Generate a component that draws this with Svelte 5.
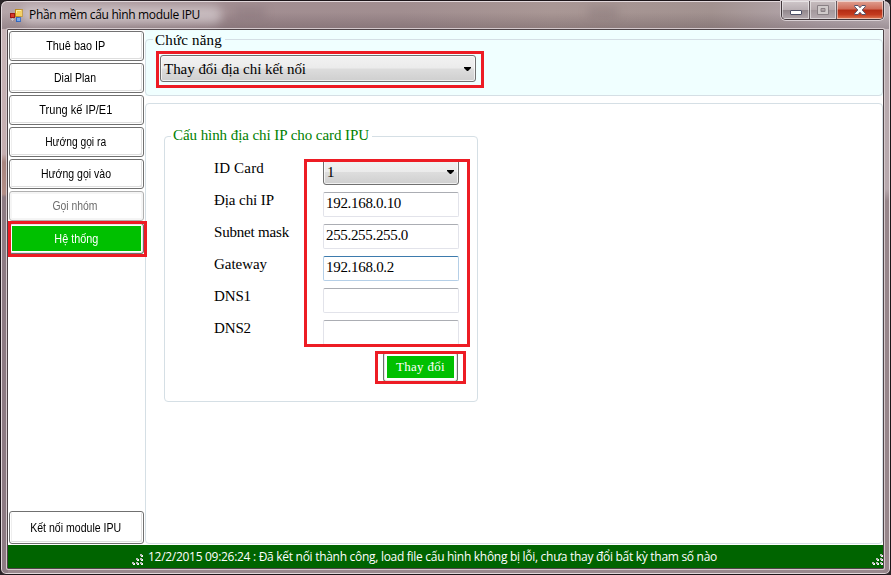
<script>
  const menu = [
    { label: 'Thuê bao IP', w: 59 },
    { label: 'Dial Plan', w: 42 },
    { label: 'Trung kế IP/E1', w: 73 },
    { label: 'Hướng gọi ra', w: 61 },
    { label: 'Hướng gọi vào', w: 70 },
    { label: 'Gọi nhóm', w: 45, disabled: true },
    { label: 'Hệ thống', w: 44, active: true }
  ];
  const fields = [
    { label: 'ID Card', lw: 50, value: '1', w: 8, select: true },
    { label: 'Địa chỉ IP', lw: 60, value: '192.168.0.10', w: 75 },
    { label: 'Subnet mask', lw: 75, value: '255.255.255.0', w: 82 },
    { label: 'Gateway', lw: 53, value: '192.168.0.2', w: 68, focus: true },
    { label: 'DNS1', lw: 37, value: '', w: 0 },
    { label: 'DNS2', lw: 37, value: '', w: 0 }
  ];
  const grip = [[8, 0], [4, 4], [8, 4], [0, 8], [4, 8], [8, 8]];

  // Tracks a label out or in to the requested width.
  function fit(node, width) {
    const count = [...node.textContent].length;
    if (!count || !width) return;
    const natural = node.getBoundingClientRect().width;
    node.style.letterSpacing = `${(width - natural) / count}px`;
  }

  // Condenses a label to the requested width.
  function condense(node, width) {
    node.style.display = 'inline-block';
    node.style.transform = `scaleX(${width / node.getBoundingClientRect().width})`;
  }
</script>

{#snippet gripper()}
  <svg class="grip" width="11" height="11" viewBox="0 0 11 11" shape-rendering="crispEdges">
    {#each grip as [x, y]}
      <rect x={x + 1} y={y + 1} width="2" height="2" fill="#f4f4f4" />
      <rect {x} {y} width="2" height="2" fill="#b9bdb9" />
    {/each}
  </svg>
{/snippet}

{#snippet arrow()}
  <svg class="arrow" width="7" height="4" viewBox="0 0 7 4"><path d="M0 0h7v1L4 4H3L0 1z" fill="#000" /></svg>
{/snippet}

<div class="window">
  <header class="titlebar">
    <svg class="app" width="13" height="13" viewBox="0 0 13 13">
      <rect x="5.5" y=".5" width="7" height="7" fill="#fbcf45" stroke="#b98718" />
      <path d="M6.5 4V1.5H11" stroke="#fff0a0" fill="none" />
      <rect x=".5" y="4.5" width="4" height="4" fill="#d8382b" stroke="#9c1512" />
      <rect x="6.5" y="8.5" width="4" height="4" fill="#6fa5ee" stroke="#2860be" />
      <path d="M1 10.5h3M2.5 9v3" stroke="#c4bdc2" />
    </svg>
    <span class="title"><span use:fit={171}>Phần mềm cấu hình module IPU</span></span>
    <i class="ghost one"></i><i class="ghost two"></i>
    <div class="controls">
      <span class="ctl min">
        <svg width="12" height="5" viewBox="0 0 12 5"><rect x=".5" y=".5" width="11" height="4" rx=".5" fill="#fff" stroke="#4b4f66" /></svg>
      </span>
      <span class="ctl max">
        <svg width="12" height="10" viewBox="0 0 12 10"><path fill-rule="evenodd" d="M.5.5h11v9H.5zM4 3.5h4v3H4z" fill="#d0caca" stroke="#888084" /></svg>
      </span>
      <span class="ctl close">
        <svg width="12" height="10" viewBox="0 0 12 10"><path d="M.7.5h3.4L6 2.7 7.9.5h3.4v1.2L8.2 5l3.1 3.3v1.2H7.9L6 7.3 4.1 9.5H.7V8.3L3.8 5 .7 1.7z" fill="#fff" stroke="#53526a" /></svg>
      </span>
    </div>
  </header>

  <div class="client">
    <div class="body">
      <nav>
        {#each menu as m}
          <button class="item" class:active={m.active} class:off={m.disabled}><span use:condense={m.w}>{m.label}</span></button>
        {/each}
        <button class="item connect"><span use:condense={91}>Kết nối module IPU</span></button>
      </nav>
      <main>
        <section class="top">
          <div class="group func">
            <span class="legend cyan"><span use:fit={67}>Chức năng</span></span>
            <div class="combo wide"><span use:fit={142}>Thay đổi địa chỉ kết nối</span>{@render arrow()}</div>
          </div>
        </section>
        <section class="panel">
          <div class="group card">
            <span class="legend green"><span use:fit={196}>Cấu hình địa chỉ IP cho card IPU</span></span>
            {#each fields as f}
              <div class="row">
                <span class="label"><span use:fit={f.lw}>{f.label}</span></span>
                {#if f.select}
                  <div class="combo"><span>{f.value}</span>{@render arrow()}</div>
                {:else}
                  <div class="input" class:focus={f.focus}><span use:fit={f.w}>{f.value}</span></div>
                {/if}
              </div>
            {/each}
            <button class="change"><span use:fit={49}>Thay đổi</span></button>
          </div>
        </section>
      </main>
    </div>
    <footer>
      {@render gripper()}
      <span class="status"><span use:fit={569}>12/2/2015 09:26:24 : Đã kết nối thành công, load file cấu hình không bị lỗi, chưa thay đổi bất kỳ tham số nào</span></span>
      {@render gripper()}
    </footer>
  </div>

  <i class="mark m1"></i>
  <i class="mark m2"></i>
  <i class="mark m3"></i>
  <i class="mark m4"></i>
</div>

<style>
  :global(body) { background: #2b2528; overflow: hidden; }
  .window {
    position: relative; box-sizing: border-box; width: 891px; height: 575px;
    border: 1px solid #1c1519; border-radius: 7px 7px 6px 6px; padding: 0 5px 5px 6px;
    box-shadow: inset 0 0 0 1px #e3d9dc;
    background:
      linear-gradient(#c9bcc0, #b8aaae 28px, #b8a9ae 160px, #97868b 172px, #97868b) right 1px top 28px / 6px 545px no-repeat,
      linear-gradient(#c8b5b8, #c5aeb0 125px, #a8857f 133px, #b28e87 165px, #8d7b83 168px, #8d7b83) 1px 28px / 6px 545px no-repeat,
      linear-gradient(#fff0, #fff0 40%, #3a283038 95%) 0 0 / 100% 28px no-repeat,
      linear-gradient(90deg, #b5a5a9, #a28e92 25%, #a18e90 45%, #a99795 62%, #a29290 80%, #b5a8ae 92%, #bdb2b7) 0 0 / 100% 28px no-repeat,
      #9a898e;
    font: 12px "Liberation Sans", Arial, sans-serif; color: #000;
  }
  button { font: inherit; margin: 0; padding: 0; }
  span { white-space: pre; }
  svg { display: block; flex: none; }
  .titlebar { display: flex; height: 28px; padding-left: 3px; position: relative; }
  .app { margin-top: 8px; }
  .title {
    font: 12px/28px "Open Sans", "Noto Sans", sans-serif; margin-left: 6px; padding: 0 8px 0 0; width: 180px; height: 26px;
    position: relative; z-index: 0;
  }
  .title::before {
    content: ""; position: absolute; z-index: -1; inset: 5px -5px 3px -8px; border-radius: 9px;
    background: #ded5d8a0; filter: blur(5px);
  }
  .ghost { position: absolute; top: 7px; width: 30px; height: 9px; background: #594a5038; filter: blur(5px); }
  .one { left: 228px; }
  .two { left: 581px; }
  .controls {
    display: flex; box-sizing: border-box; height: 19px; width: 103px; margin-left: auto; margin-right: 1px;
    border: 1px solid #40363a; border-top: 0; border-radius: 0 0 5px 5px; overflow: hidden;
    box-shadow: 0 0 0 1px #d9d0d4;
  }
  .ctl { display: flex; align-items: center; justify-content: center; box-shadow: inset 0 0 0 1px #ffffff80; }
  .min { width: 28px; padding-top: 5px; box-sizing: border-box; border-right: 1px solid #655b60; background: linear-gradient(#cfc7ca, #b9afb3 48%, #91868b 50%, #b2a8ad); }
  .max { width: 27px; border-right: 1px solid #655b60; box-sizing: border-box; background: linear-gradient(#c6bcbe, #b5aaad 48%, #a3989c 50%, #b5abb0); }
  .close { flex: 1; background: linear-gradient(#e0a193, #cf6a56 45%, #b32c14 50%, #c33a1e 75%, #e07b55); }

  .client {
    box-sizing: border-box; width: 877px; height: 540px; border: 1px solid #4d4246; border-radius: 1px;
    box-shadow: 0 0 0 1px #d4c9cc; display: flex; flex-direction: column; background: #fff;
  }
  .body { display: flex; height: 515px; }
  nav { width: 137px; box-sizing: border-box; display: flex; flex-direction: column; gap: 2px; padding: 1px 0 1px 1px; }
  .item {
    box-sizing: border-box; width: 135px; height: 30px; border: 1px solid #707070; border-radius: 3px; padding-right: 2px;
    background: #fff; box-shadow: inset 0 0 0 1px #fff, inset -2px -2px 0 #dedede, inset 2px 0 0 #eee; font-size: 12px; line-height: 26px; text-align: center; color: #000;
  }
  .off { color: #6d6d6d; border-color: #b0b0b0; box-shadow: inset 0 0 0 2px #f5f5f5; }
  .active { height: 31px; padding: 2px 0 0; color: #fff; background: #00c000; box-shadow: inset 0 0 0 1px #e8e8e8, inset 0 0 0 2px #fff; line-height: 27px; }
  .connect { height: 33px; margin-top: auto; line-height: 30px; }
  main { width: 738px; display: flex; flex-direction: column; }
  .top { height: 66px; background: #f0ffff; padding-top: 9px; box-sizing: border-box; }
  .group { position: relative; box-sizing: border-box; border: 1px solid #d5dfe5; border-radius: 4px; }
  .func { width: 738px; height: 57px; padding: 15px 0 0 14px; }
  .legend {
    position: absolute; top: -9px; left: 7px; padding: 0 3px 0 2px; background: #fff;
    font: 15px/18px "Liberation Serif", "Times New Roman", serif;
  }
  .cyan { background: #f0ffff; }
  .green { color: #008000; top: -11px; left: 6px; }
  .combo {
    display: flex; align-items: center; justify-content: space-between; box-sizing: border-box; width: 136px; height: 26px;
    border: 1px solid #707070; border-radius: 3px; padding: 0 4px 0 3px;
    background: linear-gradient(#f2f2f2, #ebebeb 49%, #dddddd 51%, #cfcfcf); box-shadow: inset 0 0 0 1px #ffffffb0;
    font: 15px/22px "Liberation Serif", "Times New Roman", serif;
  }
  .wide { width: 316px; height: 27px; }
  .panel { box-sizing: border-box; margin-top: 7px; height: 441px; border: 1px solid #d5dfe5; border-radius: 4px; padding: 32px 0 0 18px; }
  .card { width: 314px; height: 266px; padding-top: 22px; }
  .row { display: flex; height: 32px; padding-left: 49px; }
  .label { width: 109px; font: 15px/18px "Liberation Serif", "Times New Roman", serif; }
  .input {
    margin-top: 1px; box-sizing: border-box; width: 136px; height: 25px; padding-left: 2px; background: #fff;
    border: 1px solid #e2e3ea; border-top-color: #abadb3; border-radius: 2px;
    font: 15px/20px "Liberation Serif", "Times New Roman", serif;
  }
  .focus { border-color: #b5cfe7; border-top-color: #3d7bad; }
  .change {
    display: block; box-sizing: border-box; width: 75px; height: 30px; margin: 1px 0 0 218px; border: 1px solid #707070; border-radius: 3px;
    background: #00c000; box-shadow: inset 0 0 0 1px #e6e6e6, inset 0 0 0 3px #fff; color: #fff; padding-bottom: 2px;
    font: 13px/25px "Liberation Serif", "Times New Roman", serif;
  }
  footer { height: 23px; background: #006400; color: #fff; display: flex; padding-left: 124px; box-sizing: border-box; }
  .grip { margin-top: 9px; }
  .status { width: 726px; margin-left: 5px; font: 12px/23px "Open Sans", "Noto Sans", sans-serif; }
  .mark { position: absolute; box-sizing: border-box; border: 3px solid #ed1c24; }
  .m1 { left: 155px; top: 50px; width: 328px; height: 37px; }
  .m2 { left: 303px; top: 158px; width: 166px; height: 188px; }
  .m3 { left: 374px; top: 350px; width: 91px; height: 33px; }
  .m4 { left: 7px; top: 220px; width: 139px; height: 36px; }
</style>
